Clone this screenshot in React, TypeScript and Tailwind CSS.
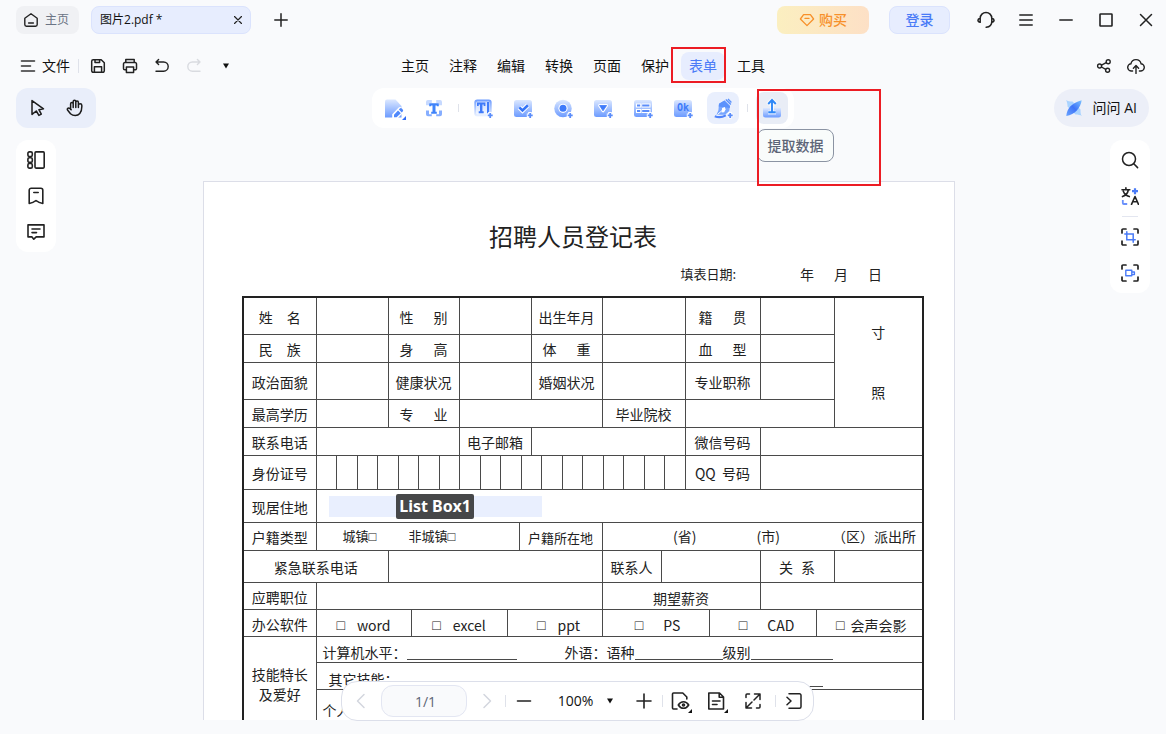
import type { ReactNode } from 'react';

const line = 'border border-[#4a4a4a]';

function Cell({ span = 1, rows = 1, className = '', children }: { span?: number; rows?: number; className?: string; children?: ReactNode }) {
  return (
    <td colSpan={span} rowSpan={rows} className={`${line} p-0 ${className}`}>
      {children}
    </td>
  );
}

function Label({ span = 1, rows = 1, children }: { span?: number; rows?: number; children?: ReactNode }) {
  return (
    <th scope="row" colSpan={span} rowSpan={rows} className={`${line} p-0 pt-0.5 text-center font-normal whitespace-nowrap`}>
      {children}
    </th>
  );
}

function Spread({ a, b, gap = 'gap-5' }: { a: string; b: string; gap?: string }) {
  return (
    <span className={`flex justify-center ${gap}`}>
      <span>{a}</span>
      <span>{b}</span>
    </span>
  );
}

function Option({ name, gap = 'gap-3' }: { name: string; gap?: string }) {
  return (
    <span className={`flex justify-center ${gap}`}>
      <Box />
      <span>{name}</span>
    </span>
  );
}

function Box() {
  return <span className="font-['Liberation_Sans']">□</span>;
}

function IconButton({ label, className = '', children }: { label: string; className?: string; children: ReactNode }) {
  return (
    <button type="button" aria-label={label} className={`flex shrink-0 items-center justify-center ${className}`}>
      {children}
    </button>
  );
}

function Line({ size = 16, children, width = 1.5, className = '' }: { size?: number; width?: number; className?: string; children: ReactNode }) {
  return (
    <svg width={size} height={size} viewBox={`0 0 ${size} ${size}`} fill="none" stroke="currentColor" strokeWidth={width} strokeLinecap="round" strokeLinejoin="round" className={className} aria-hidden="true">
      {children}
    </svg>
  );
}

function Tool({ children }: { children: ReactNode }) {
  return (
    <svg width="32" height="32" viewBox="0 0 32 32" fill="none" aria-hidden="true">
      {children}
    </svg>
  );
}

const Plus = () => (
  <>
    <path d="M23 20v6.500M19.800 23.300h6.500" stroke="#fff" strokeWidth="3.600" />
    <path d="M23.200 20.900v5M20.700 23.400h5" stroke="#5b8dfb" strokeWidth="1.800" />
  </>
);

function Divider({ className = '' }: { className?: string }) {
  return <span className={`w-px shrink-0 bg-[#dfe2ea] ${className}`} />;
}

function Caret() {
  return (
    <svg width="6" height="6" viewBox="0 0 6 6" aria-hidden="true">
      <path d="M0 .5h6L3 5.500z" fill="#111" />
    </svg>
  );
}

function TitleBar() {
  return (
    <header className="flex h-10 items-center pl-4">
      <button type="button" className="flex h-7 items-center gap-1.5 rounded-lg bg-[#f0f1f4] pr-2.5 pl-[7px] text-xs text-[#6b7484]">
        <Line width={1.4} className="text-[#222]">
          <path d="M1.800 6.200 8 1.800l6.200 4.400v6.400a1.600 1.600 0 0 1-1.600 1.600H3.400a1.600 1.600 0 0 1-1.600-1.600zM5.600 11h4.800" />
        </Line>
        主页
      </button>
      <div className="ml-3 flex h-7 w-40 items-center justify-between rounded-lg border border-[#dbe3fd] bg-[#e7edfe] px-2 text-xs text-[#111]">
        <span>图片2.pdf *</span>
        <IconButton label="关闭标签">
          <Line size={8} width={1.2} className="text-[#222]"><path d="M.5.5l7 7M7.500.5l-7 7" /></Line>
        </IconButton>
      </div>
      <IconButton label="新建标签" className="ml-4 h-7 w-7">
        <Line size={14} width={1.500} className="text-[#222]"><path d="M7 .8v12.400M.8 7h12.400" /></Line>
      </IconButton>
      <div className="ml-auto flex items-center">
        <button type="button" className="flex h-7 w-[92px] items-center justify-center gap-1 rounded-lg bg-linear-to-r from-[#fbefc0] to-[#fde0c6] text-sm font-medium text-[#f7902a]">
          <Line width={1.3}><path d="M4.600 2.600h6.800L14.600 7 8 13.600 1.400 7zM6 6.400h4" /></Line>
          购买
        </button>
        <button type="button" className="mr-4 ml-5 h-7 w-[61px] rounded-lg border border-[#dbe3fd] bg-[#e7edfe] text-sm font-medium text-[#4a7bf7]">登录</button>
        <IconButton label="客服" className="h-8 w-10 text-[#222]">
          <Line size={18}>
            <path d="M3.200 11.300V7.200a5.800 5.800 0 0 1 11.600 0v3.200c0 3.400-2.200 5.400-5.600 5.900M3.200 7.200c-3 .6-3 3.600 0 4.100M14.800 7.200c3 .6 3 3.600 0 4.100" />
          </Line>
        </IconButton>
        <IconButton label="菜单" className="h-8 w-10 text-[#222]">
          <Line size={14}><path d="M.8 2h12.400M.8 7h12.400M.8 12h12.400" /></Line>
        </IconButton>
        <IconButton label="最小化" className="h-8 w-10 text-[#222]">
          <Line size={14}><path d="M.8 7h12.400" /></Line>
        </IconButton>
        <IconButton label="最大化" className="h-8 w-10 text-[#222]">
          <Line size={14} width={1.6}><rect x="1" y="1" width="12" height="12" rx=".6" /></Line>
        </IconButton>
        <IconButton label="关闭" className="h-8 w-10 text-[#222]">
          <Line size={14}><path d="M1.500 1.500l11 11M12.500 1.500l-11 11" /></Line>
        </IconButton>
      </div>
    </header>
  );
}

function MenuBar() {
  const before = ['主页', '注释', '编辑', '转换', '页面', '保护'];
  return (
    <div className="mt-3 mb-2 grid h-7 grid-cols-[1fr_auto_1fr] items-center px-4 text-[#111]">
      <div className="flex items-center">
        <button type="button" className="flex items-center gap-1.5 pl-1 text-sm">
          <Line width={1.6} className="text-[#333]"><path d="M1.500 3h13M1.500 8h9M1.500 13h13" /></Line>
          文件
        </button>
        <Divider className="ml-2 h-3.5" />
        <div className="ml-[3px] flex text-[#222]">
          <IconButton label="保存" className="h-7 w-8">
            <Line width={1.5}>
              <path d="M1.700 3.200A1.500 1.500 0 0 1 3.200 1.700h8l3.100 3.100v8a1.500 1.500 0 0 1-1.500 1.500H3.200a1.500 1.500 0 0 1-1.500-1.500zM4.400 14.200V8.800h7.200v5.400M5 1.900v2.600h4.600V1.900" />
            </Line>
          </IconButton>
          <IconButton label="打印" className="h-7 w-8">
            <Line width={1.5}>
              <path d="M3.800 4.600V1.600h8.400v3M4 11.800H2.800a1.300 1.300 0 0 1-1.300-1.300V5.900a1.300 1.300 0 0 1 1.300-1.300h10.400a1.300 1.300 0 0 1 1.300 1.300v4.600a1.300 1.300 0 0 1-1.300 1.300H12M4.400 9h7.200v5.400H4.400z" />
            </Line>
          </IconButton>
          <IconButton label="撤销" className="h-7 w-8">
            <Line width={1.4}><path d="M4.600 1.400 2 4l2.600 2.600M2 4h7.600a4.600 4.600 0 0 1 0 9.200H2" /></Line>
          </IconButton>
          <IconButton label="重做" className="h-7 w-8 text-[#d9dbe0]">
            <Line width={1.4}><path d="M11.400 1.400 14 4l-2.600 2.600M14 4H6.400a4.600 4.600 0 0 0 0 9.200H14" /></Line>
          </IconButton>
          <IconButton label="更多" className="h-7 w-8"><Caret /></IconButton>
        </div>
      </div>
      <nav className="flex h-7 items-center gap-5 text-sm">
        {before.map((m) => <button type="button" key={m}>{m}</button>)}
        <div className="relative -mx-2">
          <button type="button" className="h-7 rounded-lg bg-[#e7edfe] px-2 text-[#4a7bf7]">表单</button>
          <span className="pointer-events-none absolute -top-[5px] -right-px h-9 w-[55px] border-2 border-[#ec1c24]" />
        </div>
        <button type="button">工具</button>
      </nav>
      <div className="flex justify-end text-[#222]">
        <IconButton label="分享" className="h-7 w-8">
          <Line width={1.4}><circle cx="3.600" cy="8" r="2" /><circle cx="12.200" cy="3.700" r="2" /><circle cx="11.600" cy="12.300" r="2" /><path d="M5.500 7.100l4.700-2.400M5.500 9l4.200 2.300" /></Line>
        </IconButton>
        <IconButton label="上传到云" className="-mr-0.5 h-7 w-8">
          <Line size={18} width={1.4}><path d="M5.600 14H4.800A3.600 3.600 0 0 1 3.900 6.800a5.200 5.200 0 0 1 10.200 0A3.600 3.600 0 0 1 13.200 14h-.8M9 16.400V9M6.400 11.200 9 8.600l2.600 2.600" /></Line>
        </IconButton>
      </div>
    </div>
  );
}

function ToolBar() {
  return (
    <div className="grid h-10 grid-cols-[1fr_auto_1fr] items-center px-4">
      <div className="flex h-10 w-fit items-center rounded-xl bg-[#e9eefa] px-0.5 text-[#1c1c1c]">
        <IconButton label="选择" className="h-9 w-[38px]">
          <Line size={18}><path d="M4 1.600 15.500 9.800l-4.600.9 2.400 4.400-2.400 1.300-2.600-4.400L4 15.400z" /></Line>
        </IconButton>
        <IconButton label="手形工具" className="h-9 w-[38px]">
          <Line size={18}>
            <path d="M4.600 10.600V4.900a1.300 1.300 0 0 1 2.600 0V8.600M7.200 8.400V2.600a1.300 1.300 0 0 1 2.600 0v5.800M9.800 8.400V3.400a1.300 1.300 0 0 1 2.600 0v5.200M12.400 8.600V6.400a1.700 1.700 0 0 1 3.400-.1c.2 4-.2 6.300-2 8.300-2.300 2.600-6.600 2.600-9.300.1L1.700 11.200a1.350 1.350 0 0 1 1.900-1.900l1.600 1.500" />
          </Line>
        </IconButton>
      </div>

      <div className="flex h-10 items-center gap-2 rounded-xl bg-white px-1.5">
        <svg width="0" height="0" className="absolute" aria-hidden="true">
          <defs>
            <linearGradient id="fade" x1="0" y1="0" x2="0" y2="1">
              <stop offset="0" stopColor="#dce8ff" />
              <stop offset="1" stopColor="#6c9bff" />
            </linearGradient>
            <linearGradient id="fadeUp" x1="0" y1="0" x2="0" y2="1">
              <stop offset="0" stopColor="#6c9bff" />
              <stop offset="1" stopColor="#eef4ff" />
            </linearGradient>
          </defs>
        </svg>
        <IconButton label="编辑表单" className="size-8">
          <Tool>
            <path d="M7 9.500a2 2 0 0 1 2-2h8.500l6 6.500V25.500H7z" fill="url(#fade)" />
            <path d="M14.200 27v-4.800l6-6.200a2.500 2.500 0 0 1 3.600 0l1.200 1.200a2.500 2.500 0 0 1 0 3.600l-6 6.200z" fill="#fff" />
            <path d="M16 25.300v-2.600l4-4.200 2.800 2.700-4.200 4.100zM20.900 17.500l.9-.9a1.500 1.500 0 0 1 2.100 0l.8.8a1.500 1.500 0 0 1 0 2.100l-.9.9z" fill="#4f88fb" />
            <path d="M28 24v4h-4z" fill="#2f6cf6" />
          </Tool>
        </IconButton>
        <IconButton label="识别表单" className="size-8">
          <Tool>
            <path d="M8 13.300V10a2 2 0 0 1 2-2h3.800v3h-2.800v2.300zM24 13.300V10a2 2 0 0 0-2-2h-3.800v3h2.800v2.300z" fill="#c6d9ff" />
            <path d="M8 18.500v3.800a2 2 0 0 0 2 2h3.800v-2h-2.800v-3.800zM24 18.500v3.800a2 2 0 0 1-2 2h-3.800v-2h2.800v-3.800z" fill="#86aeff" />
            <path d="M11.200 14.200v-3h9.600v3h-2v-.8h-1.300v6.400h1.300v2h-5.600v-2h1.300v-6.400h-1.300v.8z" fill="#3f83fa" />
          </Tool>
        </IconButton>
        <Divider className="h-2" />
        <IconButton label="文本域" className="size-8">
          <Tool>
            <rect x="7.300" y="7.500" width="17.400" height="17" rx="3" fill="url(#fadeUp)" />
            <rect x="9" y="9.500" width="14" height="13" rx="1.500" fill="#fff" opacity=".6" />
            <path d="M10 14v-3.500h8.400V14h-1.700v-1.400h-1.300v6.600h1.300v2h-5v-2h1.300v-6.600h-1.300V14zM20 10h2.200v11.500H20z" fill="#3f7bfa" />
            <Plus />
          </Tool>
        </IconButton>
        <IconButton label="复选框" className="size-8">
          <Tool>
            <rect x="7" y="8" width="18" height="17" rx="2.500" fill="url(#fade)" />
            <path d="M12.300 15.300l3.200 3.200 5.400-5.300" stroke="#fff" strokeWidth="4.600" />
            <path d="M12.300 15.300l3.200 3.200 5.400-5.300" stroke="#3474f8" strokeWidth="2.600" />
            <Plus />
          </Tool>
        </IconButton>
        <IconButton label="单选按钮" className="size-8">
          <Tool>
            <circle cx="16" cy="16.500" r="8.700" fill="url(#fade)" />
            <circle cx="16" cy="16.300" r="4.600" fill="#fff" />
            <circle cx="16" cy="16.300" r="3.500" fill="#3f7bfa" />
            <Plus />
          </Tool>
        </IconButton>
        <IconButton label="下拉框" className="size-8">
          <Tool>
            <rect x="7" y="8" width="18" height="17" rx="2.500" fill="url(#fade)" />
            <path d="M12.600 13.500h7L16 18.800z" stroke="#fff" strokeWidth="3" strokeLinejoin="round" />
            <path d="M12.600 13.500h7L16 18.800z" fill="#3f7bfa" stroke="#3f7bfa" strokeWidth=".8" />
            <Plus />
          </Tool>
        </IconButton>
        <IconButton label="列表框" className="size-8">
          <Tool>
            <rect x="7" y="8" width="18" height="17" rx="2.500" fill="url(#fade)" />
            <path d="M9 13.500h5M14.500 13.500h9M9 19h5M14.500 19h9" stroke="#fff" strokeWidth="4" />
            <path d="M10 13.500h3.200M15.200 13.500h7.200M10 19h3.200M15.200 19h7.200" stroke="#5b8dfb" strokeWidth="2.200" />
            <Plus />
          </Tool>
        </IconButton>
        <button type="button" className="relative flex size-8 items-center justify-center">
          <Tool>
            <rect x="7" y="8" width="18" height="17" rx="2.500" fill="url(#fade)" />
            <Plus />
          </Tool>
          <span className="absolute inset-0 text-center font-['DejaVu_Sans_Mono'] text-[10px] leading-8 font-bold text-[#3f7bfa]">Ok</span>
        </button>
        <IconButton label="签名域" className="size-8 rounded-lg bg-[#e9effd]">
          <Tool>
            <path d="M17.500 8.500l5.500 5.500-.8 5-4 3.800H9.500l1.900-4.600.6-6.400z" fill="#78a6fe" />
            <path d="M12 11.800l5.500-3.300 5.500 5.500-.3 2-11-1.500z" fill="#5b92fc" />
            <path d="M14.600 20.600l.5-4.600 2.700-1 .8 2.600-1.400 2.600z" fill="#fff" />
            <path d="M10.500 22.500l5.500-4.800" stroke="#fff" strokeWidth="1" />
            <path d="M18.800 7.600l5 5M21 7l3.400 3.400" stroke="#5b92fc" strokeWidth="1.400" />
            <path d="M7.800 24.200c3.600 1.600 7.400 1.200 11-.8" stroke="#4f84fb" strokeWidth="2.200" />
            <Plus />
          </Tool>
        </IconButton>
        <Divider className="h-2" />
        <div className="relative">
          <IconButton label="提取数据" className="size-8 rounded-lg bg-[#e9edf6]">
            <Tool>
              <path d="M7 16h18v7a2.500 2.500 0 0 1-2.500 2.500h-13A2.500 2.500 0 0 1 7 23z" fill="url(#fade)" />
              <path d="M16 20V8.500M11.700 12.500 16 8l4.300 4.500M12 20.500h8" stroke="#fff" strokeWidth="4" opacity=".7" />
              <path d="M16 20V8.500M12.200 12 16 8l3.800 4M12.300 20.300h7.400" stroke="#2f88f7" strokeWidth="1.900" />
            </Tool>
          </IconButton>
          <div role="tooltip" className="absolute top-[37px] left-px z-10 flex h-[33px] w-[77px] items-center justify-center rounded-lg border border-[#8b93a3] bg-[#f9fcfb] text-sm font-medium whitespace-nowrap text-[#5c6577]">提取数据</div>
          <span className="pointer-events-none absolute -top-[3px] left-px z-20 h-[97px] w-[124px] border-2 border-[#ec1c24]" />
        </div>
      </div>

      <button type="button" className="mr-px flex h-[38px] items-center gap-[11px] justify-self-end rounded-full bg-[#eceff8] px-3 text-sm text-[#111]">
        <svg width="16" height="16" viewBox="0 0 16 16" aria-hidden="true">
          <defs>
            <linearGradient id="star" x1="1" y1="0" x2="0" y2="1">
              <stop offset="0" stopColor="#7ec4ff" />
              <stop offset=".5" stopColor="#3e74f8" />
              <stop offset="1" stopColor="#6aa4ff" />
            </linearGradient>
          </defs>
          <path d="M0 0c1.500 1.500 4 1.500 6.500 1.500l8 8c0 2.500 0 5 1.500 6.500-1.500-1-4-1.500-6.500-1.500l-8-8C1.500 4 1 1.500 0 0z" fill="#a9d3ff" />
          <path d="M.300 16C.8 9 5 3 15.700.2 14.500 8 9 14.500.3 16z" fill="url(#star)" />
        </svg>
        问问 AI
      </button>
    </div>
  );
}

function LeftPanel() {
  return (
    <aside className="mt-3 ml-4 flex h-fit w-10 shrink-0 flex-col rounded-xl bg-white py-0.5 text-[#222]">
      <IconButton label="缩略图" className="h-9">
        <Line size={18} width={1.6}>
          <rect x=".9" y=".9" width="4.400" height="4.600" rx="1.400" /><rect x=".9" y="6.700" width="4.400" height="4.600" rx="1.400" /><rect x=".9" y="12.500" width="4.400" height="4.600" rx="1.400" /><rect x="8" y=".9" width="9.200" height="16.200" rx="1" />
        </Line>
      </IconButton>
      <IconButton label="书签" className="h-9">
        <Line size={18} width={1.600}><path d="M2.200 3.200A2 2 0 0 1 4.200 1.200h9.600a2 2 0 0 1 2 2V16.500c-2-.3-4.800-1.300-6.800-3-2 1.700-4.800 2.700-6.800 3zM6.800 5.500h4.400" /></Line>
      </IconButton>
      <IconButton label="批注" className="h-9">
        <Line size={18} width={1.600}><path d="M1 1.900h16v12H9.200l-2.400 2.300-1.800-2.300H1zM5 6h8M5 9.600h4.500" /></Line>
      </IconButton>
    </aside>
  );
}

function RightPanel() {
  const corners = 'M1 5V2a1 1 0 0 1 1-1h3M13 1h3a1 1 0 0 1 1 1v3M17 13v3a1 1 0 0 1-1 1h-3M5 17H2a1 1 0 0 1-1-1v-3';
  return (
    <aside className="mt-3 mr-4 flex h-fit w-10 shrink-0 flex-col rounded-xl bg-white py-0.5 text-[#222]">
      <IconButton label="搜索" className="h-9">
        <Line size={18}><circle cx="8" cy="8" r="6.500" /><path d="M12.800 12.800l3.800 3.800" /></Line>
      </IconButton>
      <IconButton label="翻译" className="h-9">
        <Line size={18} width={1.600}>
          <path d="M1 2.800h7.800M4.900 .8v2M1.500 9.600C4.800 8.400 6.700 6.400 7.300 3M2.300 4.300c1 2.600 2.900 4.400 6 5.300M10.500 17.300 14 9.500l3.500 7.800M11.700 14.800h4.600" />
          <path d="M1.800 13v3a1 1 0 0 0 1 1h3.400" stroke="#6a90fb" strokeLinecap="butt" strokeWidth="1.800" />
          <path d="M14 1.200v6M11 4.200h6" stroke="#4a7bf7" strokeWidth="2.200" strokeLinecap="butt" />
        </Line>
      </IconButton>
      <span className="mx-3 my-0.5 h-px bg-[#e3e6f0]" />
      <IconButton label="截图" className="h-9">
        <Line size={18} width={1.700}>
          <path d={corners} />
          <path d="M5.800 3.800v8h8.400M3.800 6h8.400v8.200" stroke="#4a7bf7" strokeWidth="1.500" strokeLinejoin="miter" />
        </Line>
      </IconButton>
      <IconButton label="录屏" className="h-9">
        <Line size={18} width={1.700}>
          <path d={corners} />
          <path d="M4.800 6.300h6v5.400h-6zM10.800 8h2.600v2.600h-2.600" stroke="#4a7bf7" strokeWidth="1.400" />
        </Line>
      </IconButton>
    </aside>
  );
}

function FormTable() {
  return (
    <table className="mt-3 w-full table-fixed border-collapse border-2 border-[#222]">
      <colgroup>
        <col className="w-[73px]" /><col className="w-[72px]" /><col className="w-[23px]" /><col className="w-[48px]" />
        <col className="w-[48px]" /><col className="w-[12px]" /><col className="w-[12px]" /><col className="w-[71px]" />
        <col className="w-[59px]" /><col className="w-[24px]" /><col className="w-[24px]" /><col className="w-[51px]" />
        <col className="w-[56px]" /><col className="w-[18px]" /><col className="w-[89px]" />
      </colgroup>
      <tbody>
        <tr className="h-[37px]">
          <Label><Spread a="姓" b="名" gap="gap-3.5" /></Label><Cell />
          <Label span={2}><Spread a="性" b="别" /></Label><Cell span={3} />
          <Label>出生年月</Label><Cell span={2} />
          <Label span={2}><Spread a="籍" b="贯" /></Label><Cell span={2} />
          <Cell rows={4}><div className="flex flex-col items-center gap-10"><span>寸</span><span>照</span></div></Cell>
        </tr>
        <tr className="h-7">
          <Label><Spread a="民" b="族" gap="gap-3.5" /></Label><Cell />
          <Label span={2}><Spread a="身" b="高" /></Label><Cell span={3} />
          <Label><Spread a="体" b="重" /></Label><Cell span={2} />
          <Label span={2}><Spread a="血" b="型" /></Label><Cell span={2} />
        </tr>
        <tr className="h-[37px]">
          <Label>政治面貌</Label><Cell />
          <Label span={2}>健康状况</Label><Cell span={3} />
          <Label>婚姻状况</Label><Cell span={2} />
          <Label span={2}>专业职称</Label><Cell span={2} />
        </tr>
        <tr className="h-7">
          <Label>最高学历</Label><Cell />
          <Label span={2}><Spread a="专" b="业" /></Label><Cell span={4} />
          <Label span={2}>毕业院校</Label><Cell span={4} />
        </tr>
        <tr className="h-7">
          <Label>联系电话</Label><Cell span={3} />
          <Label span={3}>电子邮箱</Label><Cell span={3} />
          <Label span={2}>微信号码</Label><Cell span={3} />
        </tr>
        <tr className="h-[34px]">
          <Label>身份证号</Label>
          <Cell span={9} className="h-[34px]">
            <div className="flex h-full">
              {Array.from({ length: 18 }, (_, i) => <span key={i} className="flex-1 border-r border-[#4a4a4a] last:border-r-0" />)}
            </div>
          </Cell>
          <Label span={2}>QQ&nbsp; 号码</Label><Cell span={3} />
        </tr>
        <tr className="h-[33px]">
          <Label>现居住地</Label>
          <Cell span={14} className="pt-px">
            <div className="ml-3 flex h-[21px] w-[213px] items-center justify-center bg-[#e9effe]">
              <span className="shrink-0 rounded-xs bg-[#464749] px-[3px] font-['Noto_Sans'] text-base leading-[25px] font-bold text-white">List Box1</span>
            </div>
          </Cell>
        </tr>
        <tr className="h-7">
          <Label>户籍类型</Label>
          <Cell span={5}><div className="flex gap-8 pl-[26px] text-[13px]"><span>城镇<Box /></span><span>非城镇<Box /></span></div></Cell>
          <Label span={2}><span className="text-[13px]">户籍所在地</span></Label>
          <Cell span={7}><div className="flex justify-end gap-[60px] pr-1.5 whitespace-nowrap"><span>(省)</span><span>(市)</span><span className="-ml-2">（区）派出所</span></div></Cell>
        </tr>
        <tr className="h-8">
          <Label span={2}>紧急联系电话</Label><Cell span={6} />
          <Label>联系人</Label><Cell span={3} />
          <Label span={2}><Spread a="关" b="系" gap="gap-2" /></Label><Cell />
        </tr>
        <tr className="h-[27px]">
          <Label>应聘职位</Label><Cell span={7} />
          <Cell span={4} className="pt-[5px] text-center">期望薪资</Cell><Cell span={3} />
        </tr>
        <tr className="h-[27px]">
          <Label>办公软件</Label>
          <Cell span={2} className="pt-[5px]"><Option name="word" /></Cell>
          <Cell span={2} className="pt-[5px]"><Option name="excel" /></Cell>
          <Cell span={3} className="pt-[5px] pl-2"><Option name="ppt" /></Cell>
          <Cell span={3} className="pt-[5px] pl-1"><Option name="PS" gap="gap-5" /></Cell>
          <Cell span={2} className="pt-[5px] pl-2"><Option name="CAD" gap="gap-5" /></Cell>
          <Cell span={2} className="pt-[5px] pl-1"><Option name="会声会影" gap="gap-1.5" /></Cell>
        </tr>
        <tr className="h-[26px]">
          <Label rows={3}>技能特长<br />及爱好</Label>
          <Cell span={14}>
            <div className="flex items-end pt-[5px] pl-1.5 whitespace-nowrap">
              <span>计算机水平：</span>
              <span className="mb-0.5 w-[110px] border-b border-[#4a4a4a]" />
              <span className="ml-12">外语：语种</span>
              <span className="mb-0.5 w-[88px] border-b border-[#4a4a4a]" />
              <span>级别</span>
              <span className="mb-0.5 w-[82px] border-b border-[#4a4a4a]" />
            </div>
          </Cell>
        </tr>
        <tr className="h-[27px]">
          <Cell span={14}>
            <div className="flex items-end pt-1.5 pl-3 whitespace-nowrap">
              <span>其它技能：</span>
              <span className="mb-0.5 w-[424px] border-b border-[#4a4a4a]" />
            </div>
          </Cell>
        </tr>
        <tr className="h-[42px]">
          <Cell span={14}><span className="pl-1.5">个人</span></Cell>
        </tr>
      </tbody>
    </table>
  );
}

function PageControls() {
  return (
    <div className="absolute -bottom-px mr-1 flex h-10 items-center rounded-2xl border border-[#dcdfea] bg-white px-[5px] text-[#222]">
      <div className="flex items-center gap-1.5">
        <IconButton label="上一页" className="size-7 text-[#d3d6de]"><Line><path d="M11 1.500 4.500 8l6.500 6.500" /></Line></IconButton>
        <input type="text" aria-label="页码" defaultValue="1/1" className="h-8 w-[86px] rounded-xl border border-[#e3e6f2] bg-[#f9fafc] pl-1 text-center text-sm text-[#5c6577]" />
        <IconButton label="下一页" className="size-7 text-[#d3d6de]"><Line><path d="M5 1.500 11.500 8 5 14.500" /></Line></IconButton>
      </div>
      <Divider className="mx-1 h-3" />
      <IconButton label="缩小" className="size-7"><Line width={1.600}><path d="M1.500 8h13" /></Line></IconButton>
      <button type="button" className="flex w-[92px] items-center justify-center gap-3.5 pl-1 text-sm text-[#111]">100%<Caret /></button>
      <IconButton label="放大" className="size-7"><Line width={1.600}><path d="M8 1v14M1 8h14" /></Line></IconButton>
      <Divider className="mx-1 h-3" />
      <div className="flex gap-2">
        <IconButton label="视图模式" className="size-7">
          <svg width="24" height="24" viewBox="0 0 24 24" fill="none" stroke="currentColor" strokeWidth="1.600" strokeLinecap="round" strokeLinejoin="round" aria-hidden="true">
            <path d="M8 20H4.500a1 1 0 0 1-1-1V5a1 1 0 0 1 1-1h9.300l4 4v2" />
            <path d="M9.300 16c2.600-4.300 7.800-4.300 10.400 0-2.600 4.300-7.800 4.300-10.400 0z" /><circle cx="14.500" cy="16" r="1" />
            <path d="M23 20v4h-4z" fill="#111" stroke="none" />
          </svg>
        </IconButton>
        <IconButton label="页面布局" className="size-7">
          <svg width="24" height="24" viewBox="0 0 24 24" fill="none" stroke="currentColor" strokeWidth="1.600" strokeLinecap="round" strokeLinejoin="round" aria-hidden="true">
            <path d="M5 4h9.500L18.500 8v12H3.800V4zM14.200 4v4.200h4.200M7.500 12h7.500M7.500 15.500h4.500" />
            <path d="M23 20v4h-4z" fill="#111" stroke="none" />
          </svg>
        </IconButton>
        <IconButton label="全屏" className="size-7">
          <Line><path d="M1 4.500V2a1 1 0 0 1 1-1h2.500M9.500 1H15v5.500M15 1 9 7M1 9.500V15h5.500M1 15l6-6M15 11.500V14a1 1 0 0 1-1 1h-2.500" /></Line>
        </IconButton>
      </div>
      <Divider className="mr-1 ml-2 h-3" />
      <IconButton label="收起" className="size-7">
        <Line><path d="M3 .8h10.500a1.500 1.500 0 0 1 1.500 1.500v11.400a1.500 1.500 0 0 1-1.500 1.500H3M1 4.200 5 8l-4 3.800" /></Line>
      </IconButton>
    </div>
  );
}

export default function App() {
  return (
    <div className="flex h-screen flex-col overflow-hidden bg-[#f9fafc] font-['Open_Sans','Noto_Sans_CJK_SC',sans-serif]">
      <TitleBar />
      <MenuBar />
      <ToolBar />
      <div className="flex min-h-0 flex-1 pb-3.5">
        <LeftPanel />
        <main className="relative flex min-w-0 flex-1 justify-center pt-[53px] pr-2">
          <article className="w-[752px] max-w-full overflow-hidden border border-b-0 border-[#dcdee8] bg-white pt-[38px] pr-[30px] pl-[38px] font-['Noto_Sans_CJK_SC',sans-serif] text-sm leading-5 text-[#222]">
            <h1 className="pr-5 text-center text-2xl leading-8">招聘人员登记表</h1>
            <div className="mt-3 flex justify-end pr-[42px]">
              <span className="mr-16 text-[13px]">填表日期:</span>
              <span className="flex gap-5"><span>年</span><span>月</span><span>日</span></span>
            </div>
            <FormTable />
          </article>
          <PageControls />
        </main>
        <RightPanel />
      </div>
    </div>
  );
}
